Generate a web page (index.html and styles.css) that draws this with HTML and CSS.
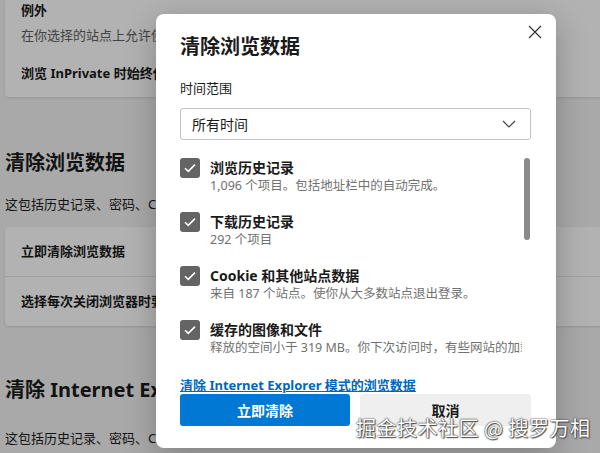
FILE: index.html
```html
<!DOCTYPE html>
<html lang="zh-CN">
  <head>
    <meta charset="utf-8" />
    <meta name="viewport" content="width=device-width, initial-scale=1" />
    <title>设置 - 隐私、搜索和服务</title>
    <link rel="stylesheet" href="styles.css">
  </head>
  <body>
    <div class="page">
      <div class="card card-top">
        <div class="row-title">例外</div>
        <div class="row-desc">在你选择的站点上允许使用跟踪器</div>
        <div class="row-title row-gap">浏览 InPrivate 时始终使用“严格”跟踪防护</div>
      </div>

      <h2 class="section-title">清除浏览数据</h2>
      <p class="section-desc">这包括历史记录、密码、Cookie 等。仅会删除此配置文件中的数据。</p>
      <div class="card">
        <div class="card-row">立即清除浏览数据</div>
        <div class="card-row">选择每次关闭浏览器时要清除的内容</div>
      </div>

      <h2 class="section-title section-title-ie">清除 Internet Explorer 浏览数据</h2>
      <p class="section-desc section-desc-ie">这包括历史记录、密码、Cookie 等。</p>
    </div>

    <div class="overlay"></div>

    <div class="dialog">
      <button class="close-btn" aria-label="关闭">
        <svg width="14" height="14" viewBox="0 0 14 14"><path d="M1 1L13 13M13 1L1 13" stroke="#333" stroke-width="1.2" fill="none"/></svg>
      </button>
      <h1 class="dialog-title">清除浏览数据</h1>

      <label class="field-label">时间范围</label>
      <div class="select">
        <span>所有时间</span>
        <svg width="14" height="8" viewBox="0 0 14 8"><path d="M1 1L7 7L13 1" stroke="#444" stroke-width="1.2" fill="none"/></svg>
      </div>

      <div class="scroll-area">
        <div class="options">
          <div class="option">
            <span class="checkbox"><svg width="12" height="10" viewBox="0 0 12 10"><path d="M1 5.2L4.3 8.4L11 1.6" stroke="#fff" stroke-width="1.6" fill="none"/></svg></span>
            <div class="option-text">
              <div class="option-name">浏览历史记录</div>
              <div class="option-desc">1,096 个项目。包括地址栏中的自动完成。</div>
            </div>
          </div>
          <div class="option">
            <span class="checkbox"><svg width="12" height="10" viewBox="0 0 12 10"><path d="M1 5.2L4.3 8.4L11 1.6" stroke="#fff" stroke-width="1.6" fill="none"/></svg></span>
            <div class="option-text">
              <div class="option-name">下载历史记录</div>
              <div class="option-desc">292 个项目</div>
            </div>
          </div>
          <div class="option">
            <span class="checkbox"><svg width="12" height="10" viewBox="0 0 12 10"><path d="M1 5.2L4.3 8.4L11 1.6" stroke="#fff" stroke-width="1.6" fill="none"/></svg></span>
            <div class="option-text">
              <div class="option-name">Cookie 和其他站点数据</div>
              <div class="option-desc">来自 187 个站点。使你从大多数站点退出登录。</div>
            </div>
          </div>
          <div class="option">
            <span class="checkbox"><svg width="12" height="10" viewBox="0 0 12 10"><path d="M1 5.2L4.3 8.4L11 1.6" stroke="#fff" stroke-width="1.6" fill="none"/></svg></span>
            <div class="option-text">
              <div class="option-name">缓存的图像和文件</div>
              <div class="option-desc">释放的空间小于 319 MB。你下次访问时，有些网站的加载速度可能会更慢。</div>
            </div>
          </div>
        </div>
        <div class="scrollbar"></div>
      </div>

      <a class="ie-link" href="#">清除 Internet Explorer 模式的浏览数据</a>

      <div class="actions">
        <button class="btn btn-primary">立即清除</button>
        <button class="btn btn-secondary">取消</button>
      </div>
    </div>

    <div class="watermark">掘金技术社区 @ 搜罗万相</div>
  </body>
</html>
```

FILE: styles.css
```css
body {
  margin: 0;
  width: 600px;
  height: 453px;
  overflow: hidden;
  font-family: "Segoe UI", "Noto Sans", "Noto Sans CJK SC", sans-serif;
  background-color: #f3f3f3;
  color: #1a1a1a;
}

/* settings page behind the dialog */
.page {
  padding: 0 0 0 5px;
  width: 700px;
}

.card {
  background: #fff;
  border-radius: 4px;
  box-shadow: 0 1px 3px rgba(0,0,0,0.12);
}

.card-top {
  padding: 1px 16px 0;
  height: 96px;
  border-radius: 0 0 4px 4px;
}

.row-title {
  font-size: 13px;
  font-weight: 700;
  line-height: 18px;
}

.row-desc {
  font-size: 13px;
  line-height: 18px;
  color: #616161;
  margin-top: 7px;
}

.row-gap {
  margin-top: 20px;
}

.section-title {
  margin: 52px 0 0;
  font-size: 20px;
  font-weight: 700;
  line-height: 28px;
}

.section-title-ie {
  margin-top: 50px;
}

.section-desc {
  margin: 19px 0 0;
  font-size: 13px;
  line-height: 16px;
}

.section-desc-ie {
  margin-top: 26px;
}

.card-row {
  height: 49px;
  line-height: 49px;
  padding: 0 16px;
  font-size: 13px;
  font-weight: 700;
}

.card-row + .card-row {
  border-top: 1px solid #e5e5e5;
}

.section-desc + .card {
  margin-top: 15px;
}

.overlay {
  position: absolute;
  inset: 0;
  background: rgba(0,0,0,0.3);
}

/* dialog */
.dialog {
  position: absolute;
  left: 156px;
  top: 14px;
  width: 400px;
  height: 434px;
  box-sizing: border-box;
  padding: 19px 25px 22px 24px;
  background: #fff;
  border-radius: 8px;
  box-shadow: 0 8px 32px rgba(0,0,0,0.25);
}

.close-btn {
  position: absolute;
  right: 14px;
  top: 11px;
  width: 14px;
  height: 14px;
  padding: 0;
  border: none;
  background: none;
  display: flex;
}

.dialog-title {
  margin: 0;
  font-size: 20px;
  font-weight: 700;
  line-height: 28px;
}

.field-label {
  display: block;
  margin-top: 18px;
  font-size: 13px;
  line-height: 18px;
}

.select {
  margin-top: 11px;
  height: 32px;
  box-sizing: border-box;
  border: 1px solid #c2c2c2;
  border-radius: 3px;
  padding: 0 14px 0 11px;
  display: flex;
  align-items: center;
  justify-content: space-between;
  font-size: 14px;
}

.scroll-area {
  position: relative;
  margin-top: 10px;
  height: 210px;
  overflow: hidden;
}

.options {
  width: 342px;
  padding-top: 8px;
  overflow: hidden;
}

.option {
  display: flex;
  gap: 10px;
  margin-bottom: 18px;
}

.checkbox {
  flex: none;
  width: 20px;
  height: 20px;
  border-radius: 3px;
  background: #646464;
  display: flex;
  align-items: center;
  justify-content: center;
}

.option-text {
  white-space: nowrap;
}

.option-name {
  font-size: 14px;
  font-weight: 700;
  line-height: 19px;
}

.option-desc {
  font-size: 12.5px;
  line-height: 17px;
  color: #717171;
}

.scrollbar {
  position: absolute;
  right: 1px;
  top: 8px;
  width: 6px;
  height: 82px;
  border-radius: 3px;
  background: #8a8a8a;
}

.ie-link {
  display: block;
  margin-top: 17px;
  font-size: 13px;
  font-weight: 700;
  line-height: 16px;
  color: #0067b8;
  text-decoration: underline;
}

.actions {
  display: grid;
  grid-template-columns: 170px 1fr;
  gap: 10px;
  margin-top: 1px;
}

.btn {
  height: 32px;
  border: none;
  border-radius: 3px;
  font-family: inherit;
  font-size: 14px;
  font-weight: 700;
}

.btn-primary {
  background: #0078d4;
  color: #fff;
}

.btn-secondary {
  background: #efefef;
  color: #1a1a1a;
}

.watermark {
  position: absolute;
  left: 356px;
  top: 414px;
  font-family: "Noto Sans CJK SC", sans-serif;
  font-size: 20px;
  line-height: 28px;
  color: #fff;
  letter-spacing: 0.5px;
  text-shadow: 0 0 1px #333, 0 0 2px #444, 1px 1px 1px #555;
}
```
